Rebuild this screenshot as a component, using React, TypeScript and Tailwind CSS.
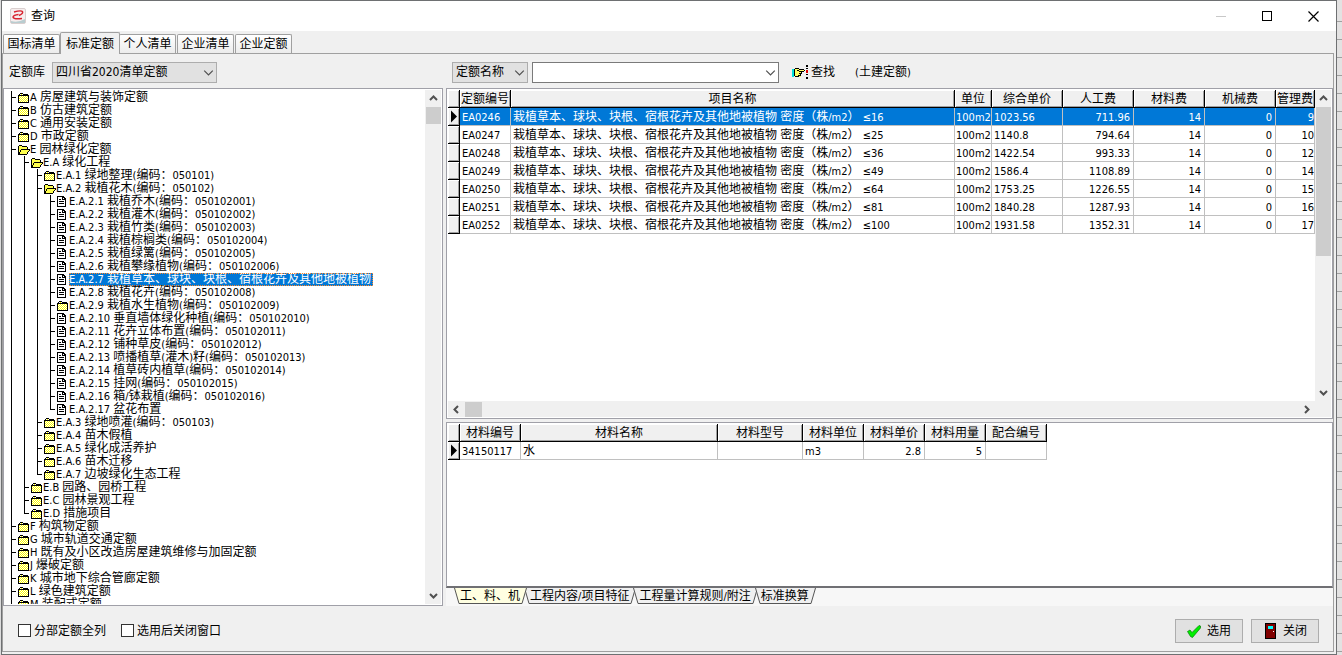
import React from "react";

type Node = { text: string; open?: boolean; leaf?: boolean; selected?: boolean; children?: Node[] };

const leaf = (text: string, selected = false): Node => ({ text, leaf: true, selected });
const folder = (text: string): Node => ({ text });

const tree: Node[] = [
  folder("A 房屋建筑与装饰定额"),
  folder("B 仿古建筑定额"),
  folder("C 通用安装定额"),
  folder("D 市政定额"),
  {
    text: "E 园林绿化定额",
    open: true,
    children: [
      {
        text: "E.A 绿化工程",
        open: true,
        children: [
          folder("E.A.1 绿地整理(编码：050101)"),
          {
            text: "E.A.2 栽植花木(编码：050102)",
            open: true,
            children: [
              leaf("E.A.2.1 栽植乔木(编码：050102001)"),
              leaf("E.A.2.2 栽植灌木(编码：050102002)"),
              leaf("E.A.2.3 栽植竹类(编码：050102003)"),
              leaf("E.A.2.4 栽植棕榈类(编码：050102004)"),
              leaf("E.A.2.5 栽植绿篱(编码：050102005)"),
              leaf("E.A.2.6 栽植攀缘植物(编码：050102006)"),
              leaf("E.A.2.7 栽植草本、球块、块根、宿根花卉及其他地被植物", true),
              leaf("E.A.2.8 栽植花卉(编码：050102008)"),
              folder("E.A.2.9 栽植水生植物(编码：050102009)"),
              leaf("E.A.2.10 垂直墙体绿化种植(编码：050102010)"),
              leaf("E.A.2.11 花卉立体布置(编码：050102011)"),
              leaf("E.A.2.12 铺种草皮(编码：050102012)"),
              leaf("E.A.2.13 喷播植草(灌木)籽(编码：050102013)"),
              leaf("E.A.2.14 植草砖内植草(编码：050102014)"),
              leaf("E.A.2.15 挂网(编码：050102015)"),
              leaf("E.A.2.16 箱/钵栽植(编码：050102016)"),
              leaf("E.A.2.17 盆花布置"),
            ],
          },
          folder("E.A.3 绿地喷灌(编码：050103)"),
          folder("E.A.4 苗木假植"),
          folder("E.A.5 绿化成活养护"),
          folder("E.A.6 苗木迁移"),
          folder("E.A.7 边坡绿化生态工程"),
        ],
      },
      folder("E.B 园路、园桥工程"),
      folder("E.C 园林景观工程"),
      folder("E.D 措施项目"),
    ],
  },
  folder("F 构筑物定额"),
  folder("G 城市轨道交通定额"),
  folder("H 既有及小区改造房屋建筑维修与加固定额"),
  folder("J 爆破定额"),
  folder("K 城市地下综合管廊定额"),
  folder("L 绿色建筑定额"),
  folder("M 装配式定额"),
];

const quotaName = "栽植草本、球块、块根、宿根花卉及其他地被植物 密度（株/m2） ≤";
const quotas = [
  ["EA0246", "16", "1023.56", "711.96", "9"],
  ["EA0247", "25", "1140.8", "794.64", "10"],
  ["EA0248", "36", "1422.54", "993.33", "12"],
  ["EA0249", "49", "1586.4", "1108.89", "14"],
  ["EA0250", "64", "1753.25", "1226.55", "15"],
  ["EA0251", "81", "1840.28", "1287.93", "16"],
  ["EA0252", "100", "1931.58", "1352.31", "17"],
];

/* Latin runs are set one size smaller than the Chinese ones. */
function T({ children }: { children: string }) {
  return (
    <>
      {children.split(/([\x20-\x7e≤]+)/).map((part, i) =>
        i % 2 ? (
          <span key={i} className="text-[11px]">
            {part}
          </span>
        ) : (
          part
        ),
      )}
    </>
  );
}

function NodeIcon({ node }: { node: Node }) {
  if (node.leaf)
    return (
      <svg width="12" height="13" viewBox="0 0 12 13" shapeRendering="crispEdges" className="shrink-0" aria-hidden="true">
        <path d="M0 1h7v1h1v1h1v9H0z" fill="#000" />
        <path d="M1 2h4v3h3v6H1z" fill="#fff" />
        <path d="M6 3h1v1H6z" fill="#fff" />
        <path d="M2 4h2v1H2zM2 6h5v1H2zM2 8h5v1H2z" fill="#000" />
      </svg>
    );
  if (node.open)
    return (
      <svg width="12" height="13" viewBox="0 0 12 13" shapeRendering="crispEdges" className="shrink-0" aria-hidden="true">
        <path d="M1 3h3v1h5v3h2l-2 4H1z" fill="#ffff4d" />
        <path d="M1 2h3v1H1zM4 3h5v1H4zM0 3h1v8H0zM9 4h1v2H9zM3 6h9v1H3zM2 7h1v2H2zM1 9h1v2H1zM0 11h9v1H0zM9 9h1v2H9zM10 8h1v1h-1zM11 7h1v1h-1z" fill="#000" />
      </svg>
    );
  return (
    <svg width="12" height="13" viewBox="0 0 12 13" shapeRendering="crispEdges" className="shrink-0" aria-hidden="true">
      <path d="M1 4h9v7H1zM2 3h3v1H2z" fill="url(#dither)" />
      <path d="M2 2h3v1H2zM1 3h1v1H1zM5 3h5v1H5zM0 4h11v1H0zM0 4h1v7H0zM10 4h1v7h-1zM0 11h11v1H0z" fill="#000" />
    </svg>
  );
}

function TreeRows({ nodes, guides = [] }: { nodes: Node[]; guides?: boolean[] }) {
  return (
    <>
      {nodes.map((node, i) => {
        const last = i === nodes.length - 1;
        return (
          <React.Fragment key={node.text}>
            <li role="treeitem" aria-selected={!!node.selected} className="flex h-[13px] whitespace-nowrap">
              {guides.map((on, g) => (
                <span key={g} className={on ? "w-[13px] shrink-0 border-l border-black" : "w-[13px] shrink-0"} />
              ))}
              <svg width="7" height="13" shapeRendering="crispEdges" className="shrink-0" aria-hidden="true">
                <path d={last ? "M0 0h1v7H0zM1 6h4v1H1z" : "M0 0h1v13H0zM1 6h4v1H1z"} />
              </svg>
              <NodeIcon node={node} />
              <span
                className={
                  node.selected
                    ? "overflow-hidden bg-[#0078d7] pr-[2px] leading-[13px] text-white outline-1 -outline-offset-1 outline-dotted outline-[#ff8728]"
                    : "leading-[13px]"
                }
              >
                <T>{node.text}</T>
              </span>
            </li>
            {node.children && <TreeRows nodes={node.children} guides={[...guides, !last]} />}
          </React.Fragment>
        );
      })}
    </>
  );
}

const arrowPaths = {
  up: "M1 6l3.5-3.5L8 6",
  down: "M1 3l3.5 3.5L8 3",
  left: "M6 1L2.500 4.500 6 8",
  right: "M3 1l3.500 3.500L3 8",
};

function Arrow({ dir, thin }: { dir: keyof typeof arrowPaths; thin?: boolean }) {
  return (
    <svg width={thin ? 11 : 9} height={thin ? 11 : 9} viewBox="0 0 9 9" fill="none" stroke="#505050" strokeWidth={thin ? 1 : 2} aria-hidden="true">
      <path d={arrowPaths[dir]} />
    </svg>
  );
}

function VScroll({ thumb }: { thumb: string }) {
  return (
    <div className="flex w-4 shrink-0 flex-col items-center bg-[#f0f0f0]">
      <button aria-label="向上滚动" className="flex h-[17px] items-center">
        <Arrow dir="up" />
      </button>
      <div className={thumb} />
      <button aria-label="向下滚动" className="mt-auto flex h-[17px] items-center">
        <Arrow dir="down" />
      </button>
    </div>
  );
}

function Head({ children }: { children?: string }) {
  return (
    <th className="h-[18px] overflow-hidden border-r border-b border-black bg-[#f0f0f0] p-0 pt-px text-center leading-4 font-normal whitespace-nowrap shadow-[inset_1px_1px_0_#fff,inset_-1px_-1px_0_#a0a0a0]">
      {children}
    </th>
  );
}

function Marker({ current }: { current?: boolean }) {
  return (
    <td className="h-[18px] border-r border-b border-black bg-[#f0f0f0] p-0 shadow-[inset_1px_1px_0_#fff,inset_-1px_-1px_0_#a0a0a0]">
      {current && (
        <svg width="10" height="13" viewBox="0 0 10 13" className="ml-px block" aria-hidden="true">
          <path d="M2 0.500L8 6.500 2 12.500z" />
        </svg>
      )}
    </td>
  );
}

const cellPadding = {
  left: "pl-[2px]",
  tight: "pl-px",
  right: "pr-[3px] text-right",
  flush: "text-right",
};

function Cell({ children = "", align = "left" }: { children?: string; align?: keyof typeof cellPadding }) {
  return (
    <td
      className={`h-[18px] overflow-hidden border-r border-b border-[#c0c0c0] p-0 pt-px leading-[15px] whitespace-nowrap ${cellPadding[align]}`}
    >
      <T>{children}</T>
    </td>
  );
}

function SheetTab({ label, active }: { label: string; active?: boolean }) {
  const fill = active ? "#ffffe1" : "#f0f0f0";
  return (
    <button role="tab" aria-selected={!!active} className={active ? "z-10 flex h-4" : "-ml-[3px] flex h-4"}>
      <svg width="6" height="16" viewBox="0 0 6 16" aria-hidden="true">
        <path d="M0 0L5 15.500H6V0z" fill={fill} />
        <path d="M0.500 0L5 15.500H6" fill="none" stroke="#555" />
      </svg>
      <span
        className={
          active
            ? "h-4 border-b border-[#555] bg-[#ffffe1] pr-px leading-[17px] whitespace-nowrap"
            : "h-4 border-b border-[#555] bg-[#f0f0f0] pr-px leading-[17px] whitespace-nowrap"
        }
      >
        <T>{label}</T>
      </span>
      <svg width="6" height="16" viewBox="0 0 6 16" aria-hidden="true">
        <path d="M6 0L1 15.500H0V0z" fill={fill} />
        <path d="M5.500 0L1 15.500H0" fill="none" stroke="#555" />
      </svg>
    </button>
  );
}

const topTabs = ["国标清单", "标准定额", "个人清单", "企业清单", "企业定额"];

export default function App() {
  return (
    <div className="flex h-screen overflow-hidden bg-[#dcdcdc] font-['DejaVu_Sans_Condensed','Liberation_Sans','Noto_Sans_CJK_SC',sans-serif] text-[12px] text-black">
      <svg width="0" height="0" className="absolute" aria-hidden="true">
        <pattern id="dither" width="2" height="2" patternUnits="userSpaceOnUse">
          <rect width="2" height="2" fill="#ffff00" />
          <rect x="1" width="1" height="1" fill="#fff" />
          <rect y="1" width="1" height="1" fill="#fff" />
        </pattern>
      </svg>

      <div className="ml-px flex min-w-0 flex-1 flex-col border border-[#6e7072] bg-[#f0f0f0]">
        <header className="flex h-[30px] shrink-0 items-center bg-white">
          <svg width="16" height="16" viewBox="0 0 16 16" className="ml-2" aria-hidden="true">
            <rect x="0.500" y="0.500" width="15" height="15" rx="1.500" fill="#f6eeee" stroke="#d9cfcf" />
            <path d="M1 13q7 2 14-2v4H1z" fill="#b9cdd0" />
            <path d="M4 4q7-2 8.500-0.500Q13.500 5.500 9 7.500M12 10.500Q3.500 11.500 3 9 3.500 7 8.500 6.500" fill="none" stroke="#d8232f" strokeWidth="1.400" />
          </svg>
          <h1 className="ml-[5px]">查询</h1>
          <div className="ml-auto flex">
            <button aria-label="最小化" className="flex w-[46px] justify-center">
              <svg width="11" height="11" shapeRendering="crispEdges">
                <path d="M0 5h10v1H0z" fill="#c8c8c8" />
              </svg>
            </button>
            <button aria-label="最大化" className="flex w-[46px] justify-center">
              <svg width="11" height="11" fill="none" stroke="#000">
                <rect x="0.500" y="0.500" width="9" height="9" />
              </svg>
            </button>
            <button aria-label="关闭窗口" className="flex w-[46px] justify-center">
              <svg width="11" height="11" stroke="#000" strokeWidth="1.200">
                <path d="M0.500 0.500l10 10M10.500 0.500l-10 10" />
              </svg>
            </button>
          </div>
        </header>

        <div role="tablist" className="flex h-[22px] shrink-0 items-end pl-px">
          {topTabs.map((t, i) => (
            <button
              key={t}
              role="tab"
              aria-selected={i === 1}
              className={
                i === 1
                  ? "z-10 -mx-px -mb-px h-[22px] w-[60px] rounded-t-[2px] border border-b-0 border-[#a0a0a0] bg-[#f0f0f0] leading-[22px]"
                  : "mr-px h-[19px] w-[57px] rounded-t-[2px] border border-b-0 border-[#a0a0a0] bg-linear-to-b from-white to-[#ececec] leading-[19px]"
              }
            >
              {t}
            </button>
          ))}
        </div>

        <main className="mr-[2px] mb-[2px] flex min-h-0 flex-1 flex-col border border-[#a0a0a0]">
          <div className="flex h-[34px] shrink-0 items-center pt-[2px]">
            <div className="flex w-[443px] shrink-0 items-center">
              <label htmlFor="library" className="ml-[6px] w-[43px] whitespace-nowrap">
                定额库
              </label>
              <div className="relative">
                <select id="library" className="block h-[21px] w-[165px] appearance-none border border-[#adadad] bg-[#e1e1e1] pl-[3px] leading-[18px]">
                  <option>四川省2020清单定额</option>
                </select>
                <span className="pointer-events-none absolute top-[5px] right-[3px]">
                  <Arrow dir="down" thin />
                </span>
              </div>
            </div>
            <div className="relative ml-[6px]">
              <select aria-label="查找字段" className="block h-[21px] w-[76px] appearance-none border border-[#adadad] bg-[#e1e1e1] pl-[3px] leading-[18px]">
                <option>定额名称</option>
              </select>
              <span className="pointer-events-none absolute top-[5px] right-[3px]">
                <Arrow dir="down" thin />
              </span>
            </div>
            <div className="ml-1 flex h-[21px] w-[247px] items-center border border-[#7a7a7a] bg-white">
              <input aria-label="查找内容" className="min-w-0 flex-1 px-1 outline-none" />
              <button aria-label="展开历史" className="pr-[2px]">
                <Arrow dir="down" thin />
              </button>
            </div>
            <button className="ml-[13px] flex items-center">
              <svg width="17" height="14" viewBox="0 0 17 14" shapeRendering="crispEdges" className="mr-[2px]" aria-hidden="true">
                <path d="M2 4h5l1 1h4v2H9v4l-1 1H4L2 10z" fill="#ffff66" />
                <path d="M0 4h2v8H0z" fill="#00e0e0" />
                <path d="M3 3h4v1H3zM7 4h5v1H7zM12 5h1v1h-1zM7 6h5v1H7zM5 5h2v1H5zM9 7h1v2H9zM7 8h2v1H7zM8 9h1v2H8zM6 10h2v1H6zM3 11h4v1H3zM2 4h1v7H2z" fill="#000" />
                <path d="M14 0h2v2h-2zM14 3h2v1h-2zM14 9h2v1h-2zM14 12h2v2h-2z" fill="#000" />
                <path d="M14 5h2v3h-2z" fill="#e00000" />
              </svg>
              查找
            </button>
            <span className="ml-[20px] whitespace-nowrap">
              <T>(</T>土建定额<T>)</T>
            </span>
          </div>

          <div className="flex min-h-0 flex-1 gap-[3px]">
            <section className="flex w-[440px] shrink-0 border border-[#a0a0a8] bg-white p-px">
              <ul role="tree" aria-label="定额目录" className="min-h-0 flex-1 overflow-hidden pt-px pl-[6px]">
                <TreeRows nodes={tree} />
              </ul>
              <VScroll thumb="h-[17px] w-[15px] bg-[#cdcdcd]" />
            </section>

            <div className="grid min-w-0 flex-1 grid-rows-[minmax(0,331fr)_minmax(0,184fr)] gap-[3px]">
              <section className="flex min-h-0 min-w-0 flex-col border border-[#a0a0a8] bg-white p-px">
                <div className="flex min-h-0 flex-1">
                  <div className="min-w-0 flex-1 overflow-hidden">
                    <table className="w-full table-fixed border-separate border-spacing-0">
                      <colgroup>
                        <col className="w-3" />
                        <col className="w-[51px]" />
                        <col />
                        <col className="w-[37px]" />
                        <col className="w-[71px]" />
                        <col className="w-[71px]" />
                        <col className="w-[71px]" />
                        <col className="w-[71px]" />
                        <col className="w-[39px]" />
                      </colgroup>
                      <thead>
                        <tr>
                          <Head />
                          <Head>定额编号</Head>
                          <Head>项目名称</Head>
                          <Head>单位</Head>
                          <Head>综合单价</Head>
                          <Head>人工费</Head>
                          <Head>材料费</Head>
                          <Head>机械费</Head>
                          <Head>管理费</Head>
                        </tr>
                      </thead>
                      <tbody>
                        {quotas.map(([code, density, price, labour, fee], i) => (
                          <tr key={code} className={i === 0 ? "bg-[#0078d7] text-white" : ""}>
                            <Marker current={i === 0} />
                            <Cell>{code}</Cell>
                            <Cell>{quotaName + density}</Cell>
                            <Cell align="tight">100m2</Cell>
                            <Cell>{price}</Cell>
                            <Cell align="right">{labour}</Cell>
                            <Cell align="right">14</Cell>
                            <Cell align="right">0</Cell>
                            <Cell align="flush">{fee}</Cell>
                          </tr>
                        ))}
                      </tbody>
                    </table>
                  </div>
                  <VScroll thumb="h-[149px] w-[15px] bg-[#cdcdcd]" />
                </div>
                <div className="flex h-4 shrink-0 items-center bg-[#f0f0f0] pr-4">
                  <button aria-label="向左滚动" className="flex w-[17px] justify-center">
                    <Arrow dir="left" />
                  </button>
                  <div className="h-[15px] w-[17px] bg-[#cdcdcd]" />
                  <button aria-label="向右滚动" className="ml-auto flex w-[17px] justify-center">
                    <Arrow dir="right" />
                  </button>
                </div>
              </section>

              <div className="flex min-h-0 min-w-0 flex-col">
                <section className="min-h-0 flex-1 overflow-hidden border border-b-2 border-[#a0a0a8] border-b-[#707074] bg-white p-px">
                  <table className="w-[599px] table-fixed border-separate border-spacing-0">
                    <colgroup>
                      <col className="w-3" />
                      <col className="w-[61px]" />
                      <col />
                      <col className="w-[85px]" />
                      <col className="w-[61px]" />
                      <col className="w-[61px]" />
                      <col className="w-[61px]" />
                      <col className="w-[61px]" />
                    </colgroup>
                    <thead>
                      <tr>
                        <Head />
                        <Head>材料编号</Head>
                        <Head>材料名称</Head>
                        <Head>材料型号</Head>
                        <Head>材料单位</Head>
                        <Head>材料单价</Head>
                        <Head>材料用量</Head>
                        <Head>配合编号</Head>
                      </tr>
                    </thead>
                    <tbody>
                      <tr>
                        <Marker current />
                        <Cell>34150117</Cell>
                        <Cell>水</Cell>
                        <Cell />
                        <Cell>m3</Cell>
                        <Cell align="right">2.8</Cell>
                        <Cell align="right">5</Cell>
                        <Cell />
                      </tr>
                    </tbody>
                  </table>
                </section>
                <div role="tablist" className="flex h-[18px] shrink-0 bg-[#f7f7f7] pl-2">
                  <SheetTab label="工、料、机" active />
                  <SheetTab label="工程内容/项目特征" />
                  <SheetTab label="工程量计算规则/附注" />
                  <SheetTab label="标准换算" />
                </div>
              </div>
            </div>
          </div>

          <footer className="flex h-[45px] shrink-0 items-center pt-[4px] pl-[15px]">
            <label className="flex items-center gap-[3px] whitespace-nowrap">
              <input type="checkbox" className="size-[13px] appearance-none border border-[#333] bg-white" />
              分部定额全列
            </label>
            <label className="ml-[15px] flex items-center gap-[3px] whitespace-nowrap">
              <input type="checkbox" className="size-[13px] appearance-none border border-[#333] bg-white" />
              选用后关闭窗口
            </label>
            <button className="mr-2 ml-auto flex h-6 w-[68px] items-center border border-[#adadad] bg-[#e1e1e1] pt-px pl-[11px]">
              <svg width="14" height="13" viewBox="0 0 14 13" className="mr-[6px]" aria-hidden="true">
                <path d="M0.500 6.500L3 5l2 2.500L12 0.500l1.500 0.500v2L5.500 12.500 3.500 11.500z" fill="#00f000" stroke="#067a06" strokeWidth="0.700" />
              </svg>
              选用
            </button>
            <button className="mr-[14px] flex h-6 w-[68px] items-center border border-[#adadad] bg-[#e1e1e1] pt-px pl-[13px]">
              <svg width="11" height="16" viewBox="0 0 11 16" shapeRendering="crispEdges" className="mr-[7px]" aria-hidden="true">
                <path d="M0 0h11v16H0z" />
                <path d="M1 1h9v14H1z" fill="#800000" />
                <path d="M3 3h5v3H3z" fill="#00ffff" />
                <path d="M8 8h1v1H8z" fill="#fff" />
              </svg>
              关闭
            </button>
          </footer>
        </main>
      </div>
      <div className="w-[5px] shrink-0 bg-[repeating-linear-gradient(#e3e2e2_0_17px,#a0a0a0_17px_18px)] bg-[position:0_4px]" />
    </div>
  );
}
